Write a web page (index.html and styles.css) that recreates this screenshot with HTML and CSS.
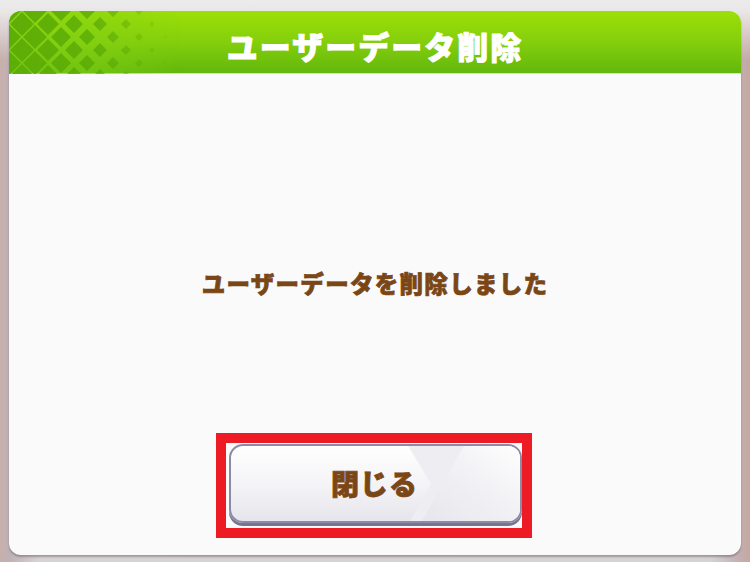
FILE: index.html
```html
<!DOCTYPE html>
<html lang="ja">
<head>
<meta charset="utf-8">
<title>ユーザーデータ削除</title>
<link rel="stylesheet" href="styles.css">
</head>
<body>
<div class="backdrop">
  <div class="dialog">
    <div class="header">
      <svg class="lattice" width="170" height="63" viewBox="0 0 170 63" aria-hidden="true">
        <defs>
          <linearGradient id="fade" x1="0" x2="1" y1="0" y2="0">
            <stop offset="0" stop-color="#fff" stop-opacity="1"/>
            <stop offset="0.5" stop-color="#fff" stop-opacity="0.85"/>
            <stop offset="1" stop-color="#fff" stop-opacity="0"/>
          </linearGradient>
          <mask id="m">
            <rect width="170" height="63" fill="url(#fade)"/>
          </mask>
        </defs>
        <g mask="url(#m)">
          <rect width="170" height="63" fill="#82cf16" opacity="0.55"/>
          <g fill="#5dad07">
            <path d="M0 -12 L12 0 L0 12 L-12 0 Z M0 14 L12 26 L0 38 L-12 26 Z M0 40 L12 52 L0 64 L-12 52 Z"/>
            <path d="M26 -12 L38 0 L26 12 L14 0 Z M26 14 L38 26 L26 38 L14 26 Z M26 40 L38 52 L26 64 L14 52 Z"/>
            <path d="M13 1 L25 13 L13 25 L1 13 Z M13 27 L25 39 L13 51 L1 39 Z M13 53 L25 65 L13 77 L1 65 Z"/>
            <path d="M39 2 L50 13 L39 24 L28 13 Z M39 28 L50 39 L39 50 L28 39 Z M39 54 L50 65 L39 76 L28 65 Z"/>
            <path d="M52 -10 L62 0 L52 10 L42 0 Z M52 16 L62 26 L52 36 L42 26 Z M52 42 L62 52 L52 62 L42 52 Z"/>
            <path d="M65 4 L74 13 L65 22 L56 13 Z M65 30 L74 39 L65 48 L56 39 Z M65 56 L74 65 L65 74 L56 65 Z"/>
            <path d="M78 -8 L86 0 L78 8 L70 0 Z M78 18 L86 26 L78 34 L70 26 Z M78 44 L86 52 L78 60 L70 52 Z"/>
            <path d="M91 6 L98 13 L91 20 L84 13 Z M91 32 L98 39 L91 46 L84 39 Z M91 58 L98 65 L91 72 L84 65 Z"/>
            <path d="M104 -6 L110 0 L104 6 L98 0 Z M104 20 L110 26 L104 32 L98 26 Z M104 46 L110 52 L104 58 L98 52 Z"/>
            <path d="M117 8 L122 13 L117 18 L112 13 Z M117 34 L122 39 L117 44 L112 39 Z M117 60 L122 65 L117 70 L112 65 Z"/>
            <path d="M130 -4 L134 0 L130 4 L126 0 Z M130 22 L134 26 L130 30 L126 26 Z M130 48 L134 52 L130 56 L126 52 Z"/>
            <path d="M143 10 L146 13 L143 16 L140 13 Z M143 36 L146 39 L143 42 L140 39 Z"/>
            <path d="M156 24 L158 26 L156 28 L154 26 Z M156 50 L158 52 L156 54 L154 52 Z"/>
          </g>
        </g>
      </svg>
      <h1 class="title">ユーザーデータ削除</h1>
    </div>
    <div class="content">
      <p class="message">ユーザーデータを削除しました</p>
      <div class="highlight">
        <button class="btn" type="button">
          <svg class="shine" width="293" height="79" viewBox="0 0 293 79" aria-hidden="true" preserveAspectRatio="none">
            <defs>
              <linearGradient id="sh" x1="0" x2="1" y1="1" y2="0">
                <stop offset="0" stop-color="#e6e5ec"/>
                <stop offset="0.6" stop-color="#f3f3f6"/>
                <stop offset="1" stop-color="#ffffff"/>
              </linearGradient>
            </defs>
            <polygon points="178,0 293,0 293,79 180,79 202,40" fill="#eeedf2"/>
            <polygon points="236,0 293,0 293,79 192,79" fill="url(#sh)"/>
          </svg>
          <span class="btn-label">閉じる</span>
        </button>
      </div>
    </div>
  </div>
</div>
</body>
</html>
```
FILE: styles.css
```css
html, body {
  margin: 0;
  padding: 0;
}
body {
  width: 750px;
  height: 562px;
  overflow: hidden;
  font-family: "Noto Sans CJK JP", "Noto Sans", sans-serif;
}
.backdrop {
  width: 750px;
  height: 562px;
  box-sizing: border-box;
  padding: 11px 9px 7px 9px;
  background:
    linear-gradient(180deg, #ececec 0px, #e9e6e6 12px, rgba(0,0,0,0) 60px),
    linear-gradient(90deg, #c8b0aa 0px, #bfb2b6 10px, #d8d4d4 40px, #d6d3d3 710px, #c2aeb0 740px, #c6a99f 750px);
}
.dialog {
  height: 544px;
  border-radius: 12px;
  background: #fafafa;
  box-shadow: 0 2px 2px rgba(90, 80, 90, 0.45);
  display: flex;
  flex-direction: column;
  overflow: hidden;
}
.header {
  position: relative;
  height: 63px;
  flex: none;
  background: linear-gradient(180deg, #9ddf08 0%, #84cf0c 50%, #63b70c 100%);
  display: flex;
  align-items: center;
  justify-content: center;
  border-bottom: 1px solid #d9dcd2;
  box-sizing: border-box;
}
.lattice {
  position: absolute;
  left: 0;
  top: 0;
}
.title {
  position: relative;
  margin: 0;
  color: #ffffff;
  font-size: 31px;
  font-weight: 900;
  letter-spacing: 2px;
  line-height: 40px;
  padding-top: 8px;
  -webkit-text-stroke: 0.9px #ffffff;
}
.content {
  flex: 1;
  display: flex;
  flex-direction: column;
  align-items: center;
}
.message {
  margin: 194px 0 0 0;
  line-height: 30px;
  font-size: 23.5px;
  font-weight: 900;
  letter-spacing: 1.3px;
  color: #7b4616;
  -webkit-text-stroke: 0.7px #7b4616;
}
.highlight {
  margin-top: 135px;
  margin-left: -2px;
  border: 10px solid #ed1c24;
  padding: 1px 0 2px 3px;
  background: #fafafa;
}
.btn {
  position: relative;
  display: block;
  width: 293px;
  height: 79px;
  margin: 0 0 3px 0;
  padding: 0;
  border: 2px solid #8d8aa8;
  border-radius: 14px;
  background: linear-gradient(180deg, #ffffff 0%, #f3f3f6 55%, #e6e5ec 100%);
  box-shadow: 0 3px 0 #77748f;
  overflow: hidden;
  font-family: inherit;
  cursor: pointer;
}
.shine {
  position: absolute;
  left: -2px;
  top: -2px;
}
.btn-label {
  position: relative;
  display: block;
  text-align: center;
  padding-right: 2px;
  font-size: 28px;
  font-weight: 900;
  letter-spacing: 1px;
  color: #7b4616;
  line-height: 75px;
  -webkit-text-stroke: 0.8px #7b4616;
}
```
